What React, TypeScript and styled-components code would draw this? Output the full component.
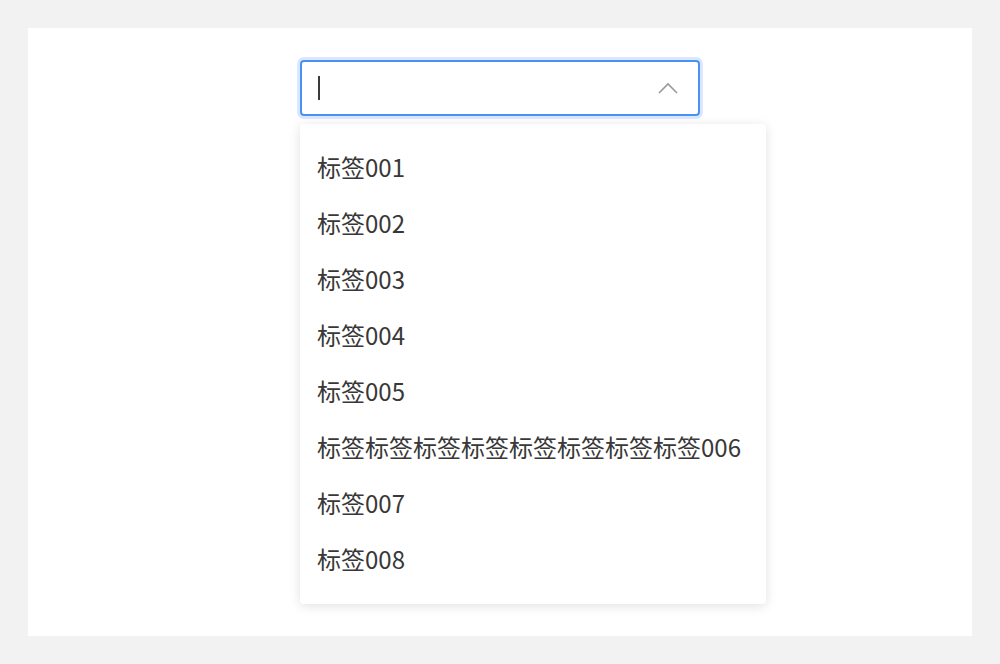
import React from 'react';
import styled, { createGlobalStyle } from 'styled-components';

const GlobalStyle = createGlobalStyle`
  html, body {
    margin: 0;
    padding: 0;
    background: #f2f2f2;
  }
  body {
    font-family: "Noto Sans CJK SC", "Noto Sans", sans-serif;
  }
`;

const tags = [
  '标签001',
  '标签002',
  '标签003',
  '标签004',
  '标签005',
  '标签标签标签标签标签标签标签标签006',
  '标签007',
  '标签008',
];

export default function App() {
  return (
    <Page>
      <GlobalStyle />
      <Card>
        <SelectWrap>
          <SelectBox>
            <Caret />
            <Chevron viewBox="0 0 20 12">
              <path d="M1 11 L10 2 L19 11" />
            </Chevron>
          </SelectBox>
          <Dropdown>
            {tags.map((tag) => (
              <Option key={tag}>{tag}</Option>
            ))}
          </Dropdown>
        </SelectWrap>
      </Card>
    </Page>
  );
}

const Page = styled.div`
  padding: 28px;
  height: 664px;
  box-sizing: border-box;
`;

const Card = styled.div`
  background: #fff;
  height: 608px;
  padding-top: 32px;
  box-sizing: border-box;
  display: flex;
  justify-content: center;
`;

const SelectWrap = styled.div`
  position: relative;
  width: 400px;
  height: 56px;
`;

const SelectBox = styled.div`
  box-sizing: border-box;
  width: 400px;
  height: 56px;
  border: 2px solid #4a90f7;
  border-radius: 4px;
  box-shadow: 0 0 0 3px #d9e8fd;
  background: #fff;
  display: flex;
  align-items: center;
  padding: 0 20px 0 16px;
`;

const Caret = styled.span`
  display: block;
  width: 2px;
  height: 24px;
  background: #3a3a3a;
`;

const Chevron = styled.svg`
  margin-left: auto;
  width: 20px;
  height: 12px;
  fill: none;
  stroke: #999;
  stroke-width: 1.6;
`;

const Dropdown = styled.ul`
  position: absolute;
  top: 64px;
  left: 0;
  margin: 0;
  padding: 16px 25px 16px 17px;
  list-style: none;
  background: #fff;
  border-radius: 4px;
  box-shadow: 0 2px 12px rgba(0, 0, 0, 0.12);
  width: max-content;
  min-width: 400px;
`;

const Option = styled.li`
  height: 56px;
  line-height: 54px;
  font-size: 24px;
  color: #383838;
  white-space: nowrap;
`;
